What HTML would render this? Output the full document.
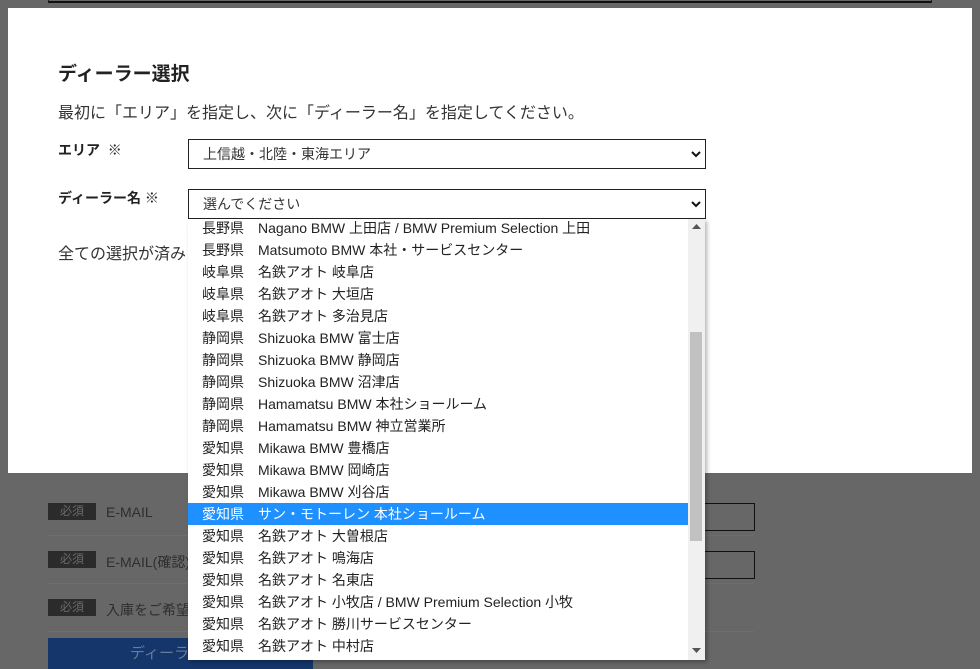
<!DOCTYPE html>
<html><head><meta charset="utf-8"><style>
*{margin:0;padding:0;box-sizing:border-box}
body{width:980px;height:669px;overflow:hidden;background:#676767;position:relative;font-family:"Liberation Sans","Noto Sans CJK JP",sans-serif;color:#222}
.abs{position:absolute}
.panel{left:8px;top:8px;width:964px;height:465px;background:#fff}
.sel{border:1px solid #222;background:#fff;font-size:14px;color:#333;padding-left:14px;line-height:28px}
.chev{position:absolute;right:4px;top:10px;width:10px;height:8px}
.badge{left:48px;width:48px;height:17px;background:#2b2b2b;color:#6a6a6a;font-size:12px;text-align:center;line-height:17px}
.lab{left:106px;font-size:14px;color:#2e2e2e}
.list{left:188px;top:219px;width:517px;height:441px;background:#fff;overflow:hidden;box-shadow:2px 2px 4px rgba(0,0,0,.3)}
.row{height:22px;line-height:22px;font-size:14px;color:#222;padding-left:14px;white-space:nowrap;width:500px}
.row span{display:inline-block;width:56px}
.row.hl{background:#1e90ff;color:#fff}
</style></head><body>
<div class="abs" style="left:48px;top:0;width:884px;height:3px;border:1px solid #222;border-top:none;border-bottom:2px solid #111"></div>
<div class="abs panel"></div>
<div class="abs" style="left:58px;top:59px;font-size:19px;font-weight:bold;color:#222">ディーラー選択</div>
<div class="abs" style="left:58px;top:99px;font-size:16px;color:#333">最初に「エリア」を指定し、次に「ディーラー名」を指定してください。</div>
<div class="abs" style="left:58px;top:140px;font-size:14px;font-weight:bold">エリア&nbsp; <span style="font-weight:normal">※</span></div>
<div class="abs sel" style="left:188px;top:139px;width:518px;height:30px">上信越・北陸・東海エリア<svg class="chev" viewBox="0 0 10 8"><path d="M1 2l4 4 4-4" stroke="#111" stroke-width="2" fill="none"/></svg></div>
<div class="abs" style="left:58px;top:188px;font-size:14px;font-weight:bold">ディーラー名 ※</div>
<div class="abs sel" style="left:188px;top:189px;width:518px;height:30px">選んでください<svg class="chev" viewBox="0 0 10 8"><path d="M1 2l4 4 4-4" stroke="#111" stroke-width="2" fill="none"/></svg></div>
<div class="abs" style="left:58px;top:240px;font-size:16px;color:#333">全ての選択が済み</div>

<div class="abs badge" style="top:503px">必須</div><div class="abs lab" style="top:504px">E-MAIL</div>
<div class="abs badge" style="top:551px">必須</div><div class="abs lab" style="top:552px">E-MAIL(確認)</div>
<div class="abs badge" style="top:599px">必須</div><div class="abs lab" style="top:600px">入庫をご希望</div>
<div class="abs" style="left:48px;top:535px;width:706px;height:1px;background:#6e6e6e"></div>
<div class="abs" style="left:48px;top:583px;width:706px;height:1px;background:#6e6e6e"></div>
<div class="abs" style="left:48px;top:631px;width:706px;height:1px;background:#6e6e6e"></div>
<div class="abs" style="left:600px;top:503px;width:155px;height:28px;border:1px solid #111"></div>
<div class="abs" style="left:600px;top:551px;width:155px;height:28px;border:1px solid #111"></div>
<div class="abs" style="left:48px;top:638px;width:265px;height:31px;background:#14366a;color:#6a7a99;font-size:15px;line-height:31px;padding-left:82px">ディーラー</div>

<div class="abs list">
<div style="margin-top:-2px">
<div class="row"><span>長野県</span>Nagano BMW 上田店 / BMW Premium Selection 上田</div>
<div class="row"><span>長野県</span>Matsumoto BMW 本社・サービスセンター</div>
<div class="row"><span>岐阜県</span>名鉄アオト 岐阜店</div>
<div class="row"><span>岐阜県</span>名鉄アオト 大垣店</div>
<div class="row"><span>岐阜県</span>名鉄アオト 多治見店</div>
<div class="row"><span>静岡県</span>Shizuoka BMW 富士店</div>
<div class="row"><span>静岡県</span>Shizuoka BMW 静岡店</div>
<div class="row"><span>静岡県</span>Shizuoka BMW 沼津店</div>
<div class="row"><span>静岡県</span>Hamamatsu BMW 本社ショールーム</div>
<div class="row"><span>静岡県</span>Hamamatsu BMW 神立営業所</div>
<div class="row"><span>愛知県</span>Mikawa BMW 豊橋店</div>
<div class="row"><span>愛知県</span>Mikawa BMW 岡崎店</div>
<div class="row"><span>愛知県</span>Mikawa BMW 刈谷店</div>
<div class="row hl"><span>愛知県</span>サン・モトーレン 本社ショールーム</div>
<div class="row"><span>愛知県</span>名鉄アオト 大曽根店</div>
<div class="row"><span>愛知県</span>名鉄アオト 鳴海店</div>
<div class="row"><span>愛知県</span>名鉄アオト 名東店</div>
<div class="row"><span>愛知県</span>名鉄アオト 小牧店 / BMW Premium Selection 小牧</div>
<div class="row"><span>愛知県</span>名鉄アオト 勝川サービスセンター</div>
<div class="row"><span>愛知県</span>名鉄アオト 中村店</div>
</div>
<div class="abs" style="left:500px;top:0;width:17px;height:441px;background:#f0f0f0"></div>
<div class="abs" style="left:502px;top:113px;width:12px;height:209px;background:#c1c1c1"></div>
<svg class="abs" style="left:504px;top:5px" width="9" height="6"><path d="M0 5L4.5 0 9 5z" fill="#555"/></svg>
<svg class="abs" style="left:504px;top:429px" width="9" height="6"><path d="M0 0L4.5 5 9 0z" fill="#555"/></svg>
</div>
</body></html>
